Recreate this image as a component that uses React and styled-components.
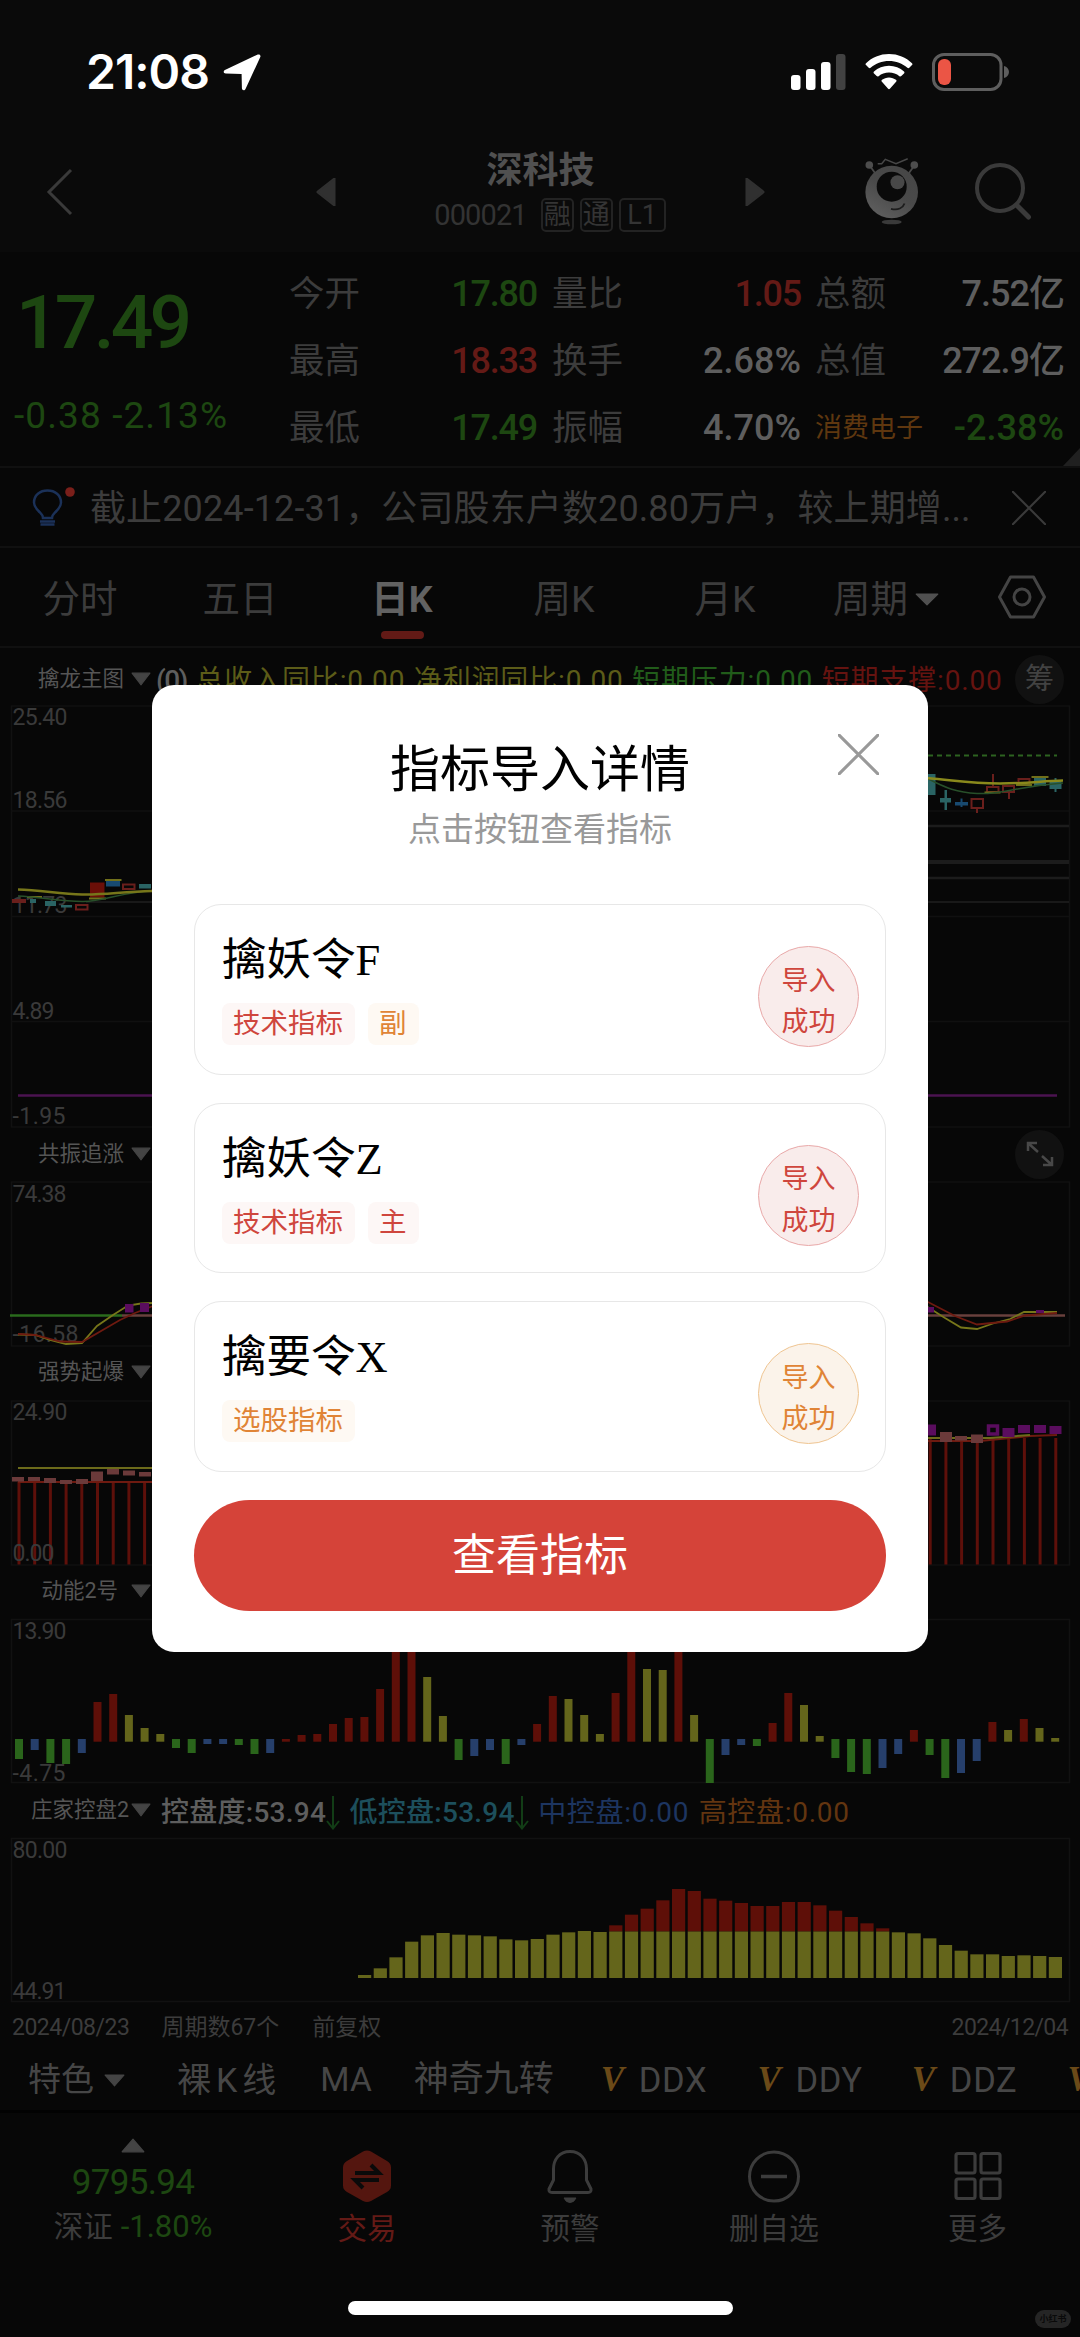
import React from "react";
import styled, { createGlobalStyle } from "styled-components";

const Global = createGlobalStyle`
  * { box-sizing: border-box; }
  html, body { margin: 0; padding: 0; background: #070707; }
  body { font-family: Roboto, "Noto Sans CJK SC", sans-serif; }
`;

const C = {
  green: "#1d4711",
  red: "#641a16",
  text: "#5e5e5e",
  dim: "#3c3c3c",
  line: "#101010",
  orange: "#5f370f",
};

/* ---------- shell ---------- */
const Page = styled.div`
  position: relative;
  width: 1080px;
  height: 2337px;
  overflow: hidden;
  display: flex;
  flex-direction: column;
  background: #070707;
`;
const Txt = styled.span`
  display: block;
  white-space: nowrap;
  margin-left: ${(p) => p.$ml || 0};
  color: ${(p) => p.$c || C.dim};
  font-size: ${(p) => p.$s || 36}px;
  font-weight: ${(p) => p.$b || 400};
  letter-spacing: ${(p) => p.$ls || 0}px;
  line-height: ${(p) => p.$lh || 44}px;
`;
const Row = styled.div`
  display: flex;
  align-items: center;
  justify-content: ${(p) => (p.$end ? "flex-end" : "flex-start")};
  gap: ${(p) => p.$g || 0}px;
  padding-left: ${(p) => p.$pl || 0}px;
`;

/* ---------- status bar ---------- */
const StatusBar = styled.div`
  height: 144px;
  flex: none;
  display: flex;
  align-items: center;
  padding: 0 70px 0 86px;
  background: #0a0a0a;
`;
const Clock = styled.div`
  font: 600 48px/56px Inter, sans-serif;
  letter-spacing: -1px;
  color: #fff;
  width: 137px;
`;
const StatusIcons = styled.div`
  margin-left: auto;
  display: flex;
  align-items: center;
  gap: 19px;
`;

/* ---------- header ---------- */
const Header = styled.div`
  height: 108px;
  flex: none;
  display: grid;
  grid-template-columns: 80px 256px 409px 119px 56px 55px 58px;
  align-items: center;
  padding-bottom: 12px;
  background: #0a0a0a;
`;
const Center = styled.div`
  display: flex;
  flex-direction: column;
  align-items: center;
`;
const SubRow = styled.div`
  display: flex;
  align-items: center;
  gap: 6px;
  margin: 2px 0 0 19px;
`;
const Badge = styled.span`
  height: 34px;
  width: ${(p) => p.$w}px;
  margin-left: ${(p) => p.$ml || 0}px;
  border: 2px solid #232323;
  border-radius: 5px;
  color: #343434;
  font-size: 27px;
  line-height: 30px;
  text-align: center;
`;

/* ---------- quote ---------- */
const Quote = styled.div`
  height: 216px;
  flex: none;
  display: grid;
  grid-template-columns: 289px 247px 248px 248px;
  position: relative;
  border-bottom: 2px solid ${C.line};
`;
const PriceCol = styled.div`
  padding: 24px 0 0 16px;
`;
const StatCol = styled.div`
  display: flex;
  flex-direction: column;
  padding-top: 8px;
  margin-left: ${(p) => p.$ml || 0}px;
  width: ${(p) => p.$w}px;
`;
const Stat = styled.div`
  height: 67px;
  display: flex;
  align-items: center;
  justify-content: space-between;
`;
const Corner = styled.i`
  position: absolute;
  right: 0;
  bottom: 0;
  border-style: solid;
  border-width: 0 0 18px 17px;
  border-color: transparent transparent #202020 transparent;
`;

/* ---------- news + tabs ---------- */
const News = styled.div`
  height: 80px;
  flex: none;
  display: flex;
  align-items: center;
  padding: 2px 34px 0 30px;
  border-bottom: 2px solid ${C.line};
`;
const NewsText = styled(Txt)`
  margin-left: 12px;
  padding-top: 2px;
  width: 922px;
`;
const Tabs = styled.div`
  height: 100px;
  flex: none;
  display: grid;
  grid-template-columns: 160px 160px 164px 160px 162px 160px 114px;
  align-items: center;
  border-bottom: 2px solid ${C.line};
`;
const Tab = styled.div`
  height: 98px;
  display: flex;
  align-items: center;
  justify-content: center;
  gap: 7px;
  padding-top: 4px;
  color: ${(p) => (p.$on ? "#626262" : C.dim)};
  font-size: 37.5px;
  font-weight: ${(p) => (p.$on ? 700 : 400)};
  line-height: 44px;
  ${(p) =>
    p.$on &&
    `flex-direction: column; gap: 10px; padding-top: 22px;
     &::after { content: ""; width: 43px; height: 8px; border-radius: 4px; background: #621a16; }`}
`;

/* ---------- indicator heads ---------- */
const Head = styled.div`
  height: ${(p) => p.$h}px;
  flex: none;
  display: flex;
  align-items: center;
  padding-right: 16px;
  padding-top: ${(p) => p.$pt || 0}px;
`;
const HeadName = styled.div`
  width: 151px;
  flex: none;
  display: flex;
  align-items: center;
  justify-content: flex-end;
  gap: ${(p) => p.$g || 7}px;
  color: #555;
  font-size: 21.5px;
  line-height: 28px;
  white-space: nowrap;
`;
const Values = styled.div`
  display: flex;
  align-items: center;
  margin-left: ${(p) => p.$ml}px;
  margin-top: ${(p) => p.$mt || 3}px;
  gap: ${(p) => p.$g}px;
`;
const Round = styled.div`
  width: 49px;
  height: 49px;
  margin-left: auto;
  border-radius: 50%;
  background: #111;
  color: #424242;
  font-size: 29px;
  line-height: 48px;
  display: flex;
  align-items: center;
  justify-content: center;
`;
const Chart = styled.svg`
  display: block;
  flex: none;
  font-family: Roboto, sans-serif;
  font-size: 23px;
`;
const Dates = styled.div`
  height: 42px;
  flex: none;
  display: flex;
  align-items: center;
  padding: 2px 12px 0;
`;

/* ---------- toolbar + nav ---------- */
const Toolbar = styled.div`
  height: 65px;
  flex: none;
  display: flex;
  align-items: center;
  padding: 2px 0 0 28px;
  border-bottom: 3px solid #020202;
`;
const Rule = styled.i`
  width: 2px;
  height: 41px;
  margin: 0 32px 0 20px;
  background: #111;
`;
const Vip = styled.span`
  flex: none;
  font: italic 700 35px/44px "Liberation Serif", serif;
  color: #6b4a18;
  width: 27px;
  margin: 0 11px 0 ${(p) => p.$ml}px;
`;
const Nav = styled.div`
  height: 170px;
  flex: none;
  display: grid;
  grid-template-columns: 266px 202px 204px 204px 203px;
`;
const NavItem = styled.div`
  display: flex;
  flex-direction: column;
  align-items: center;
  padding-top: ${(p) => p.$pt || 35}px;
`;
const NavLabel = styled(Txt)`
  margin-top: ${(p) => p.$mt ?? 3}px;
`;
const Bottom = styled.div`
  height: 54px;
  flex: none;
  display: flex;
  justify-content: center;
  padding-top: 18px;
`;
const HomeBar = styled.div`
  width: 385px;
  height: 14px;
  border-radius: 7px;
  background: #fff;
`;
const Mark = styled.div`
  position: absolute;
  right: 9px;
  bottom: 9px;
  width: 36px;
  height: 18px;
  border-radius: 9px;
  background: #252525;
  color: #0a0a0a;
  font-size: 9px;
  font-weight: 700;
  line-height: 18px;
  text-align: center;
`;

/* ---------- dialog ---------- */
const Dialog = styled.section`
  position: absolute;
  left: 152px;
  top: 685px;
  width: 776px;
  height: 967px;
  padding: 55px 42px 0;
  border-radius: 22px;
  background: #fff;
  display: flex;
  flex-direction: column;
`;
const CloseBtn = styled.button`
  position: absolute;
  right: 49px;
  top: 49px;
  width: 41px;
  height: 41px;
  padding: 0;
  border: 0;
  background: none;
`;
const DlgTitle = styled.h1`
  margin: 0;
  text-align: center;
  font-weight: 400;
  font-size: 50px;
  line-height: 60px;
  color: #000;
`;
const DlgSub = styled.p`
  margin: 8px 0 52px;
  text-align: center;
  font-size: 33px;
  line-height: 44px;
  color: #999;
`;
const Cards = styled.div`
  display: flex;
  flex-direction: column;
  gap: 28px;
`;
const Card = styled.div`
  height: 170.5px;
  border: 1.5px solid #e7e7e7;
  border-radius: 27px;
  display: flex;
  justify-content: space-between;
  align-items: flex-start;
  padding: 26px 26px 0 27px;
`;
const CardMain = styled.div`
  display: flex;
  flex-direction: column;
  gap: 16px;
`;
const CardTitle = styled.div`
  margin-top: 2px;
  font: 400 44.5px/54px "Liberation Serif", "Noto Sans CJK SC", serif;
  color: #000;
`;
const Tags = styled.div`
  display: flex;
  gap: 13px;
`;
const tone = {
  red: { fg: "#cf463d", bg: "#fdf7f6", ring: "#e9a9a9", fill: "#f9eceb" },
  orange: { fg: "#e08436", bg: "#fef9f3", ring: "#efc592", fill: "#fbf3ea" },
};
const Tag = styled.span`
  height: 42px;
  padding: 0 12px 0 11px;
  border-radius: 8px;
  font-size: 27.5px;
  line-height: 41px;
  color: ${(p) => tone[p.$t].fg};
  background: ${(p) => tone[p.$t].bg};
`;
const Done = styled.button`
  width: 101px;
  height: 101px;
  margin-top: 15px;
  padding: 5px 0 0;
  border-radius: 50%;
  border: 1.5px solid ${(p) => tone[p.$t].ring};
  background: ${(p) => tone[p.$t].fill};
  color: ${(p) => tone[p.$t].fg};
  font: 400 27px/41.5px "Noto Sans CJK SC", sans-serif;
`;
const Primary = styled.button`
  margin-top: 28px;
  height: 111px;
  flex: none;
  padding: 0 0 7px;
  border: 0;
  border-radius: 56px;
  background: #d54339;
  color: #fff;
  font: 400 44px/60px "Noto Sans CJK SC", sans-serif;
`;

/* ---------- icons ---------- */
const Icon = styled.svg`
  display: block;
  flex: none;
`;
const Tri = ({ w = 20, h = 12, c = "#444", dir = "down" }) => {
  const d = { down: "1,1 19,1 10,11", up: "1,11 19,11 10,1", left: "19,0 19,12 1,6", right: "1,0 1,12 19,6" }[dir];
  return (
    <Icon width={w} height={h} viewBox="0 0 20 12" preserveAspectRatio="none">
      <polygon points={d} fill={c} stroke={c} strokeWidth="1" strokeLinejoin="round" />
    </Icon>
  );
};
const Cross = ({ size, c, w }) => (
  <Icon width={size} height={size} viewBox="0 0 40 40">
    <path d="M1 1 39 39M39 1 1 39" stroke={c} strokeWidth={w} strokeLinecap="round" />
  </Icon>
);
const LocationArrow = () => (
  <Icon width="38" height="37" viewBox="0 0 38 37">
    <path d="M36.4.6c1 .5 1.300 1.500.9 2.500L22.500 35c-.9 1.900-3.500 1.500-3.600-.7L18.600 20 2.700 19.600c-2.300-.1-2.700-2.500-.8-3.500L34.200.7c.8-.4 1.500-.4 2.200-.1Z" fill="#fff" />
  </Icon>
);
const Signal = () => (
  <Icon width="55" height="36" viewBox="0 0 55 36">
    <rect x="0" y="21" width="9.500" height="15" rx="3" fill="#fff" />
    <rect x="15" y="15" width="9.500" height="21" rx="3" fill="#fff" />
    <rect x="30" y="8" width="9.500" height="28" rx="3" fill="#fff" />
    <rect x="45" y="0" width="9.500" height="36" rx="3" fill="#424242" />
  </Icon>
);
const Wifi = () => (
  <Icon width="48" height="36" viewBox="0 0 48 36">
    <path d="M24 0C15 0 7 3.400 1 9.200c-.6.6-.6 1.300 0 1.900l2.700 2.700c.6.6 1.300.6 1.900 0C10.500 9.200 17 6.900 24 6.900s13.500 2.300 18.400 6.900c.6.6 1.300.6 1.900 0l2.700-2.700c.6-.6.6-1.300 0-1.900C41 3.400 33 0 24 0Z" fill="#fff" />
    <path d="M24 11.800c-5.800 0-11 2.100-15 5.700-.6.6-.6 1.300 0 1.900l2.700 2.700c.6.6 1.200.6 1.900.1 2.800-2.400 6.400-3.700 10.400-3.700s7.600 1.300 10.400 3.700c.7.5 1.300.5 1.900-.1l2.700-2.700c.6-.6.6-1.300 0-1.900-4-3.600-9.200-5.700-15-5.700Z" fill="#fff" />
    <path d="M24 23.400c-2.700 0-5.100.9-7 2.400-.7.6-.7 1.300-.1 1.900l6 6.900c.7.8 1.500.8 2.200 0l6-6.900c.6-.6.6-1.300-.1-1.900-1.900-1.500-4.300-2.400-7-2.400Z" fill="#fff" />
  </Icon>
);
const Battery = () => (
  <Icon width="78" height="38" viewBox="0 0 78 38">
    <rect x="1.500" y="1.500" width="67.500" height="35" rx="10.500" fill="none" stroke="#5e5e5e" strokeWidth="3" />
    <path d="M72 13c3 .8 5 3 5 6s-2 5.200-5 6Z" fill="#5e5e5e" />
    <rect x="6" y="6" width="13" height="26" rx="6" fill="#eb5545" />
  </Icon>
);
const Robot = () => (
  <Icon width="56" height="68" viewBox="0 0 56 68">
    <defs>
      <linearGradient id="rb" x1=".8" y1="0" x2=".2" y2="1">
        <stop offset="0" stopColor="#464646" />
        <stop offset=".5" stopColor="#4a4a4a" />
        <stop offset="1" stopColor="#606060" />
      </linearGradient>
    </defs>
    <g stroke="#484848" fill="none" strokeWidth="1.800">
      <path d="M6 8 11 15M50 8 45 15" />
      <path d="M13.700 5.700H17.700L21.300 1.300 32 5.700 43.700.8" strokeWidth="1.500" />
    </g>
    <circle cx="5.300" cy="7" r="3.800" fill="#4d4d4d" />
    <circle cx="50.300" cy="7" r="3.800" fill="#4d4d4d" />
    <circle cx="27.700" cy="34" r="26.300" fill="url(#rb)" />
    <circle cx="27.700" cy="28.700" r="15" fill="#0a0a0a" />
    <circle cx="33.500" cy="24.300" r="7" fill="#484848" />
    <path d="M27 50.800C34 52.500 39 50 40.500 45.500" stroke="#1c1c1c" strokeWidth="1.800" fill="none" />
    <ellipse cx="27.700" cy="64" rx="10" ry="2.300" fill="#3a3a3a" />
  </Icon>
);
const Search = () => (
  <Icon width="58" height="58" viewBox="0 0 58 58" fill="none" stroke="#3a3a3a" strokeWidth="4">
    <circle cx="25" cy="25" r="23" />
    <path d="M42 42.500 53.500 54" strokeWidth="5" strokeLinecap="round" />
  </Icon>
);
const Bulb = () => (
  <Icon width="48" height="42" viewBox="0 0 48 42" fill="none">
    <path d="M13 30c0-3-1.500-4-4-6.500C6 20.500 4 18 4 14.500 4 7 10 2.500 17.500 2.500S31 7 31 14.500c0 3.500-2 6-5 9-2.500 2.500-4 3.500-4 6.500Z" transform="translate(0 1)" stroke="#1b3158" strokeWidth="2.500" />
    <path d="M10 34.500h15M10.500 37.500h14" stroke="#1b3158" strokeWidth="2.500" />
    <circle cx="40" cy="5" r="4.800" fill="#7a1f1a" />
  </Icon>
);
const Hexagon = () => (
  <Icon width="48" height="44" viewBox="0 0 48 44" fill="none" stroke="#444" strokeWidth="3" strokeLinejoin="round">
    <path d="M12.500 2h23L46.500 22 35.500 42h-23L1.500 22Z" />
    <circle cx="24" cy="22" r="8" />
  </Icon>
);
const Down = () => (
  <Icon width="14" height="34" viewBox="0 0 14 34" fill="none" stroke="#123d16" strokeWidth="2">
    <path d="M7 0V32M1 25 7 32.500 13 25" />
  </Icon>
);

/* ---------- chart data ---------- */
const Label = ({ y, w = 55, children }) => (
  <text x="12.500" y={y + 8} fill="#3a3a3a" textLength={w}>{children}</text>
);
const K = { r: "#5e0f08", y: "#64651b", g: "#2a651b", b: "#263f6b" };
const momentum = `g1759 b1750 g1763 g1764 b1753 r1702 r1694 y1715 y1728 y1734 g1748 g1753 b1744 b1744 g1745 g1754 b1753 r1739 r1735 r1734 r1724 r1718 r1717 r1689 r1645 r1640 y1677 y1716 g1760 b1756 b1750 g1764 b1745 r1724 r1696 y1699 y1715 y1734 r1693 r1640 y1669 y1670 r1640 y1715 g1783 b1755 b1745 g1746 r1723 r1693 y1705 y1736 g1758 g1772 g1774 b1768 b1754 r1730 g1755 g1778 b1773 b1761 r1722 y1730 r1719 y1728 y1738`
  .split(" ")
  .map((s) => [s[0], +s.slice(1)]);
const control = [555, 535, 502, 455, 436, 429, 434, 436, 439, 448, 451, 447, 434, 427, 423, 426, 406, 374, 356, 331, 297, 303, 326, 332, 339, 348, 348, 336, 336, 346, 362, 381, 400, 415, 427, 430, 445, 465, 482, 493, 493, 498, 496, 498, 501].map((v) => 1790 + v / 3);

const cyan = "#2a6464";
const blue = "#184a70";
const purple = "#5a0d5e";
const pink = "#6b3a3a";

const Box = ({ x, y, w, h, c, hollow }) =>
  hollow ? (
    <rect x={x + 1} y={y + 1} width={w - 2} height={h - 2} fill="none" stroke={c} strokeWidth="2" />
  ) : (
    <rect x={x} y={y} width={w} height={h} fill={c} />
  );

const MainChart = () => (
  <Chart width="1080" height="430" viewBox="0 700 1080 430" fill="none">
    <rect x="11.500" y="706" width="1058" height="421" stroke="#111" strokeWidth="1.500" />
    <path d="M11 811H1069M11 916.500H1069M11 1021.500H1069" stroke="#101010" strokeWidth="1.500" />
    <path d="M86 902H152M920 902H1069" stroke="#202020" strokeWidth="1.500" />
    <path d="M920 826H1069M920 878H1069" stroke="#1c1c1c" strokeWidth="2.500" />
    <path d="M920 862H1069" stroke="#1c1c1c" strokeWidth="4" />
    <Label y={717}>25.40</Label>
    <Label y={800}>18.56</Label>
    <Label y={905}>11.73</Label>
    <Label y={1011} w={42}>4.89</Label>
    <Label y={1116} w={53}>-1.95</Label>
    <Box x={12} y={899} w={14} h={4} c="#6a1f1c" />
    <Box x={27} y={896} w={15} h={2} c="#71701a" />
    <Box x={30} y={899} w={6} h={4} c={cyan} />
    <Box x={45} y={901} w={11} h={5} c={cyan} />
    <Box x={61} y={905} w={11} h={2.5} c={cyan} />
    <Box x={75} y={904} w={13.5} h={6.5} c="#6a1f1c" hollow />
    <Box x={90} y={882.5} w={14.5} h={15} c="#6b0f08" />
    <Box x={89} y={897.5} w={17} h={2} c="#71701a" />
    <Box x={106} y={881} w={14} h={5.5} c={blue} />
    <Box x={105} y={879} w={16.5} h={2} c="#71701a" />
    <Box x={122} y={883.5} w={13.5} h={6.5} c="#6a1f1c" hollow />
    <Box x={139} y={884} w={12} h={4.5} c={cyan} />
    <path d="M18 896C40 897 60 901 82 901.500S120 892 152 891" stroke="#28502a" strokeWidth="1.500" />
    <path d="M18 889.500C40 890 60 894 82 894.500S120 892 152 891" stroke="#77761a" strokeWidth="2.500" />
    <path d="M18 1095.500H1057" stroke="#4b1350" strokeWidth="2.500" />

    <path d="M928 755.500H1057" stroke="#2d6320" strokeWidth="2" strokeDasharray="5 4" />
    <Box x={926} y={774} w={9.5} h={21} c={cyan} />
    <Box x={940} y={798} w={11} h={4.5} c={cyan} />
    <Box x={944.5} y={790} w={2.5} h={20} c={cyan} />
    <Box x={955} y={802} w={13} h={3.5} c={blue} />
    <Box x={960.5} y={798.5} w={2} h={8.5} c={blue} />
    <Box x={970.5} y={798} w={13.5} h={11} c="#6a1f1c" hollow />
    <Box x={976} y={809} w={2} h={4} c="#6a1f1c" />
    <Box x={986} y={786} w={13.5} h={7} c="#6a1f1c" hollow />
    <Box x={992} y={774} w={2} h={12} c="#6a1f1c" />
    <Box x={984.5} y={791.5} w={16} h={2} c="#71701a" />
    <Box x={1002} y={785} w={13} h={8} c="#6a1f1c" hollow />
    <Box x={1008} y={793} w={2} h={6} c="#6a1f1c" />
    <Box x={1017.5} y={778} w={13} h={8} c="#6a1f1c" hollow />
    <Box x={1016} y={784} w={16} h={2} c="#71701a" />
    <Box x={1034} y={778} w={12} h={8} c={cyan} />
    <Box x={1031.5} y={776} w={17} h={2} c="#71701a" />
    <Box x={1049.5} y={781} w={12} h={8} c={cyan} />
    <Box x={1054.5} y={778} w={2} h={14} c={cyan} />
    <path d="M926 778C940 784 950 792 977 793.500S1010 787 1063 783" stroke="#28502a" strokeWidth="1.500" />
    <path d="M926 778C960 781 970 783.500 1000 783.500S1040 781 1063 780.500" stroke="#8a891c" strokeWidth="2.500" />
  </Chart>
);
const ResonanceChart = () => (
  <Chart width="1080" height="172" viewBox="0 1178 1080 172" fill="none">
    <rect x="11.500" y="1182" width="1058" height="164" stroke="#111" strokeWidth="1.500" />
    <Label y={1194} w={54}>74.38</Label>
    <Label y={1334} w={66}>-16.58</Label>
    <path d="M10 1315.500H122" stroke="#2a6b1c" strokeWidth="2.500" />
    <path d="M122 1315.500H1065" stroke="#69403d" strokeWidth="2.500" />
    <path d="M18 1334.500 35 1335 50 1340 66 1344 82 1343 97 1326 113 1315 128 1305.500 141 1303.500 153 1303M926 1306 945 1318 961 1327.500 977 1329 993 1323.500 1010 1319 1024 1312 1057 1312" stroke="#77761a" strokeWidth="1.800" />
    <path d="M18 1334 35 1335 60 1341.500 82 1342 120 1320 135 1313 153 1306M926 1301 955 1316 977 1324.500 1007 1321.500 1025 1315.500 1057 1313" stroke="#6e1a10" strokeWidth="1.800" />
    <Box x={125} y={1304} w={8.5} h={8.5} c={purple} />
    <Box x={140} y={1303} w={9} h={9} c={purple} />
    <Box x={926} y={1307} w={8} h={5.5} c={purple} />
    <Box x={1036} y={1310} w={8} h={3} c={purple} />
  </Chart>
);
const stemsLeft = Array.from({ length: 9 }, (_, i) => 17.5 + i * 15.7);
const stemsRight = Array.from({ length: 9 }, (_, i) => 928.7 + i * 15.7);
const BurstChart = () => (
  <Chart width="1080" height="174" viewBox="0 1394 1080 174" fill="none">
    <rect x="11.500" y="1401" width="1058" height="164" stroke="#111" strokeWidth="1.500" />
    {stemsLeft.map((x) => <rect key={x} x={x} y={1482} width="3" height="82.500" fill="#5e100a" />)}
    {stemsRight.map((x) => <rect key={x} x={x} y={1438} width="3" height="126.500" fill="#5e100a" />)}
    <Label y={1412}>24.90</Label>
    <Label y={1553} w={42}>0.00</Label>
    <path d="M18 1482H153M926 1441 980 1441 1030 1436 1057 1435" stroke="#6e1a10" strokeWidth="2" />
    <path d="M18 1468H153M926 1438H990L1030 1435" stroke="#6c6b1a" strokeWidth="2" />
    {[[12, 1477, 4.5], [28, 1477, 4], [44, 1478, 5], [60, 1480, 4], [76, 1479, 5], [91, 1471.5, 9.5], [107, 1469, 5.5], [123, 1470.5, 5], [139, 1472, 4.5], [940, 1432, 10], [955, 1436, 4.5], [971, 1434.5, 8.5]].map(([x, y, h]) => (
      <Box key={x} x={x} y={y} w={12} h={h} c={pink} />
    ))}
    {[[924, 1424.5, 11], [1002.5, 1428, 9], [1018, 1425, 8], [1034, 1425, 8], [1049.5, 1426, 8]].map(([x, y, h]) => (
      <Box key={x} x={x} y={y} w={12} h={h} c={purple} />
    ))}
    <rect x="988.500" y="1426" width="9" height="8" stroke={purple} strokeWidth="3.500" />
  </Chart>
);
const MomentumChart = () => (
  <Chart width="1080" height="172" viewBox="0 1614 1080 172" fill="none">
    <rect x="11.500" y="1619.500" width="1058" height="163" stroke="#111" strokeWidth="1.500" />
    {momentum.map(([k, y], i) => {
      const up = k === "r" || k === "y";
      const top = up ? y : 1739;
      const end = up ? 1741.7 : y;
      return <rect key={i} x={15 + i * 15.7} y={top} width="8" height={end - top} fill={K[k]} />;
    })}
    <Label y={1631} w={54}>13.90</Label>
    <Label y={1772.5} w={53}>-4.75</Label>
  </Chart>
);
const ControlChart = () => (
  <Chart width="1080" height="172" viewBox="0 1834 1080 172" fill="none">
    <rect x="11.500" y="1838.500" width="1058" height="163" stroke="#111" strokeWidth="1.500" />
    {control.map((y, i) => {
      const over = i > 15 && i < 34;
      const top = over ? 1931.5 : y;
      return (
        <g key={i}>
          {over && <rect x={358 + i * 15.7} y={y} width="13.200" height={1931.5 - y} fill={K.r} />}
          <rect x={358 + i * 15.7} y={top} width="13.200" height={1978 - top} fill={K.y} />
        </g>
      );
    })}
    <Label y={1850}>80.00</Label>
    <Label y={1991} w={54}>44.91</Label>
  </Chart>
);

const indicators = [
  { name: "擒妖令F", tags: [["技术指标", "red"], ["副", "orange"]], t: "red" },
  { name: "擒妖令Z", tags: [["技术指标", "red"], ["主", "red"]], t: "red" },
  { name: "擒要令X", tags: [["选股指标", "orange"]], t: "orange" },
];
const stats = [
  { w: 248, ml: 0, rows: [["今开", "17.80", C.green, -1.2], ["最高", "18.33", C.red, -1.2], ["最低", "17.49", C.green, -1.2]] },
  { w: 249, ml: 16, rows: [["量比", "1.05", C.red, -1.2], ["换手", "2.68%", C.text, 0], ["振幅", "4.70%", C.text, 0]] },
  { w: 249, ml: 31, rows: [["总额", "7.52亿", C.text, -1], ["总值", "272.9亿", C.text, -1], ["消费电子", "-2.38%", C.green, 0]] },
];

export default function App() {
  return (
    <Page>
      <Global />
      <StatusBar>
        <Clock>21:08</Clock>
        <LocationArrow />
        <StatusIcons>
          <Signal />
          <Wifi />
          <Battery />
        </StatusIcons>
      </StatusBar>

      <Header>
        <Icon width="80" height="50" viewBox="0 0 80 50" fill="none" stroke="#3a3a3a" strokeWidth="3">
          <path d="M71 3 49 25 71 47" />
        </Icon>
        <Row $end>
          <Tri w={20} h={28} dir="left" c="#303030" />
        </Row>
        <Center>
          <Txt $s={36} $b={700} $c="#505050" $lh={44}>深科技</Txt>
          <SubRow>
            <Txt $s={29} $c="#333" $ls={-0.9} $lh={40}>000021</Txt>
            <Badge $w={33} $ml={8}>融</Badge>
            <Badge $w={33}>通</Badge>
            <Badge $w={47}>L1</Badge>
          </SubRow>
        </Center>
        <Tri w={20} h={28} dir="right" c="#303030" />
        <Robot />
        <span />
        <Search />
      </Header>

      <Quote>
        <PriceCol>
          <Txt $s={75} $b={500} $c={C.green} $ls={-3.8} $lh={92}>17.49</Txt>
          <Txt $s={37} $c={C.green} $ls={1.1} $lh={96} $ml="-2px">-0.38 -2.13%</Txt>
        </PriceCol>
        {stats.map((col) => (
          <StatCol key={col.ml} $w={col.w} $ml={col.ml}>
            {col.rows.map(([k, v, c, ls]) => (
              <Stat key={k}>
                <Txt $s={k.length > 2 ? 27 : 35.5} $c={k.length > 2 ? C.orange : C.dim}>{k}</Txt>
                <Txt $s={36} $b={500} $c={c} $ls={ls}>{v}</Txt>
              </Stat>
            ))}
          </StatCol>
        ))}
        <Corner />
      </Quote>

      <News>
        <Bulb />
        <NewsText $s={36} $ls={0.12}>截止2024-12-31，公司股东户数20.80万户，较上期增...</NewsText>
        <Cross size={34} c="#3a3a3a" w={2.5} />
      </News>

      <Tabs>
        <Tab>分时</Tab>
        <Tab>五日</Tab>
        <Tab $on>日K</Tab>
        <Tab>周K</Tab>
        <Tab>月K</Tab>
        <Tab>
          周期 <Tri w={24} h={13} c="#505050" />
        </Tab>
        <Row $pl={32}>
          <Hexagon />
        </Row>
      </Tabs>

      <Head $h={52} $pt={10}>
        <HeadName>擒龙主图 <Tri h={14} /></HeadName>
        <Values $ml={5} $g={8.5}>
          <Txt $s={28} $b={500} $c={C.text} $ls={-1.5}>(0)</Txt>
          <Txt $s={28} $c="#5c5c18" $ls={0.85}>总收入同比:0.00</Txt>
          <Txt $s={28} $c="#5c5c18" $ls={0.85}>净利润同比:0.00</Txt>
          <Txt $s={28} $c="#215c1a" $ls={0.85}>短期压力:0.00</Txt>
          <Txt $s={28} $c="#651310" $ls={0.85}>短期支撑:0.00</Txt>
        </Values>
        <Round>筹</Round>
      </Head>
      <MainChart />
      <Head $h={48}>
        <HeadName>共振追涨 <Tri h={14} /></HeadName>
        <Round>
          <Icon width="28" height="28" viewBox="0 0 28 28" fill="none" stroke="#484848" strokeWidth="2.500">
            <path d="M2 11V3H11M2 3 12 12M26 17V25H17M26 25 16 16" />
          </Icon>
        </Round>
      </Head>
      <ResonanceChart />
      <Head $h={44}>
        <HeadName>强势起爆 <Tri h={14} /></HeadName>
      </Head>
      <BurstChart />
      <Head $h={46}>
        <HeadName $g={13}>动能2号 <Tri h={14} /></HeadName>
      </Head>
      <MomentumChart />
      <Head $h={48}>
        <HeadName $g={2}>庄家控盘2 <Tri h={14} /></HeadName>
        <Values $ml={10} $g={9.5} $mt={5}>
          <Row><Txt $s={28} $b={500} $c={C.text} $ls={0.25}>控盘度:53.94</Txt><Down /></Row>
          <Row><Txt $s={28} $b={500} $c="#1d4f5c" $ls={0.25}>低控盘:53.94</Txt><Down /></Row>
          <Txt $s={28} $c="#1d3560" $ls={0.7}>中控盘:0.00</Txt>
          <Txt $s={28} $c="#633510" $ls={0.7}>高控盘:0.00</Txt>
        </Values>
      </Head>
      <ControlChart />
      <Dates>
        <Txt $s={23} $ls={-0.5}>2024/08/23</Txt>
        <Txt $s={23} $ml="32px">周期数67个</Txt>
        <Txt $s={23} $ml="33px">前复权</Txt>
        <Txt $s={23} $ls={-0.6} $ml="auto">2024/12/04</Txt>
      </Dates>

      <Toolbar>
        <Txt $s={33} $c="#464646">特色</Txt>
        <Row $pl={10}><Tri w={21} h={13} c="#444" /></Row>
        <Rule />
        <Txt $s={34} $c="#464646" $ls={5}>裸K线</Txt>
        <Txt $s={33.5} $c="#464646" $ml="39px">MA</Txt>
        <Txt $s={35} $c="#464646" $ml="42px">神奇九转</Txt>
        <Vip $ml={47}>V</Vip><Txt $s={34.5} $c="#464646" $ls={0.7}>DDX</Txt>
        <Vip $ml={50}>V</Vip><Txt $s={34.5} $c="#464646" $ls={0.7}>DDY</Txt>
        <Vip $ml={49}>V</Vip><Txt $s={34.5} $c="#464646" $ls={0.7}>DDZ</Txt>
        <Vip $ml={50}>V</Vip>
      </Toolbar>

      <Nav>
        <NavItem $pt={25}>
          <Tri w={24} h={15} dir="up" />
          <NavLabel $s={35} $c={C.green} $mt={8} $ls={-0.7}>9795.94</NavLabel>
          <Row $g={8}>
            <Txt $s={29.5}>深证</Txt>
            <Txt $s={31} $c={C.green}>-1.80%</Txt>
          </Row>
        </NavItem>
        <NavItem>
          <Icon width="50" height="56" viewBox="0 0 50 56">
            <path d="M21 3.500q4-2.200 8 0l16 9.500q4 2.200 4 6.500v18q0 4.300-4 6.500L29 53q-4 2.200-8 0L5 44q-4-2.200-4-6.500v-18Q1 15.200 5 13Z" fill="#54160f" />
            <path d="M13 25H37L29 17M37 32H13L21 40" stroke="#0a0a0a" strokeWidth="4" fill="none" />
          </Icon>
          <NavLabel $s={29.5} $c={C.red}>交易</NavLabel>
        </NavItem>
        <NavItem>
          <Icon width="50" height="56" viewBox="0 0 50 56" fill="none" stroke="#3c3c3c" strokeWidth="3">
            <path d="M25 3.500C14 3.500 8.500 12 8.500 21V32L4 41Q3.500 44.500 7 44.500H43Q46.500 44.500 46 41L41.500 32V21C41.500 12 36 3.500 25 3.500Z" strokeLinejoin="round" />
            <path d="M19 50H31Q29 54.500 25 54.500T19 50Z" fill="#3c3c3c" strokeWidth="1" />
          </Icon>
          <NavLabel $s={29.5}>预警</NavLabel>
        </NavItem>
        <NavItem>
          <Icon width="54" height="56" viewBox="0 0 54 56" fill="none" stroke="#3c3c3c" strokeWidth="3">
            <circle cx="27" cy="28.500" r="24.500" />
            <path d="M14 28.500H40" strokeWidth="3.500" />
          </Icon>
          <NavLabel $s={30}>删自选</NavLabel>
        </NavItem>
        <NavItem>
          <Icon width="50" height="56" viewBox="0 0 50 56" fill="none" stroke="#3c3c3c" strokeWidth="3.200">
            <rect x="3" y="5.500" width="19" height="19.500" rx="2" />
            <rect x="28" y="5.500" width="19" height="19.500" rx="2" />
            <rect x="3" y="31" width="19" height="19.500" rx="2" />
            <rect x="28" y="31" width="19" height="19.500" rx="2" />
          </Icon>
          <NavLabel $s={29.5}>更多</NavLabel>
        </NavItem>
      </Nav>
      <Bottom><HomeBar /></Bottom>
      <Mark>小红书</Mark>

      <Dialog>
        <CloseBtn aria-label="关闭"><Cross size={41} c="#999" w={3} /></CloseBtn>
        <DlgTitle>指标导入详情</DlgTitle>
        <DlgSub>点击按钮查看指标</DlgSub>
        <Cards>
          {indicators.map((it) => (
            <Card key={it.name}>
              <CardMain>
                <CardTitle>{it.name}</CardTitle>
                <Tags>
                  {it.tags.map(([label, t]) => <Tag key={label} $t={t}>{label}</Tag>)}
                </Tags>
              </CardMain>
              <Done $t={it.t}>导入<br />成功</Done>
            </Card>
          ))}
        </Cards>
        <Primary>查看指标</Primary>
      </Dialog>
    </Page>
  );
}
